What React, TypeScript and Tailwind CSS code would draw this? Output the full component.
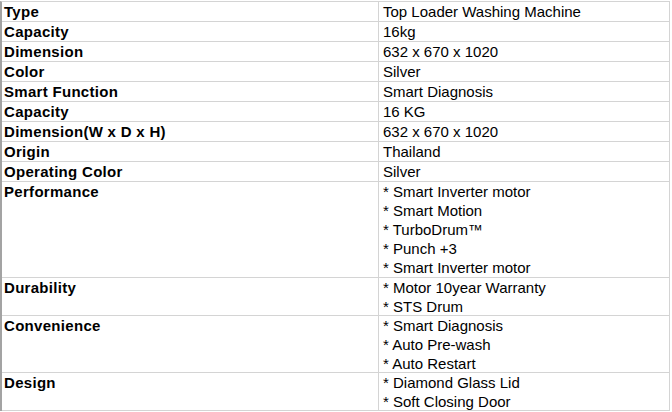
import React from "react";

const rows: [string, string[], string][] = [
  ["Type", ["Top Loader Washing Machine"], "h-[20px]"],
  ["Capacity", ["16kg"], "h-[20px]"],
  ["Dimension", ["632 x 670 x 1020"], "h-[20px]"],
  ["Color", ["Silver"], "h-[20px]"],
  ["Smart Function", ["Smart Diagnosis"], "h-[20px]"],
  ["Capacity", ["16 KG"], "h-[20px]"],
  ["Dimension(W x D x H)", ["632 x 670 x 1020"], "h-[20px]"],
  ["Origin", ["Thailand"], "h-[20px]"],
  ["Operating Color", ["Silver"], "h-[20px]"],
  [
    "Performance",
    [
      "* Smart Inverter motor",
      "* Smart Motion",
      "* TurboDrum™",
      "* Punch +3",
      "* Smart Inverter motor",
    ],
    "h-[96px]",
  ],
  ["Durability", ["* Motor 10year Warranty", "* STS Drum"], "h-[38px]"],
  [
    "Convenience",
    ["* Smart Diagnosis", "* Auto Pre-wash", "* Auto Restart"],
    "h-[57px]",
  ],
  ["Design", ["* Diamond Glass Lid", "* Soft Closing Door"], "h-[38px]"],
];

export default function App() {
  return (
    <div
      className="w-[672px] h-[412px] overflow-hidden bg-white text-black"
      style={{ fontFamily: '"Liberation Sans", Arial, sans-serif' }}
    >
      <div className="mt-px w-[670px] border-t border-l-2 border-r border-t-[#d4d4d4] border-l-[#a3a3a3] border-r-[#d4d4d4]">
        {rows.map(([label, values, h], i) => (
          <div key={i} className={`flex overflow-hidden border-b border-[#d4d4d4] ${h}`}>
            <div className="w-[377px] shrink-0 border-r border-[#d4d4d4] pl-[2px] text-[15px] leading-[19px] font-bold tracking-[0.3px]">
              {label}
            </div>
            <div className="flex-1 pl-[4px] text-[15px] leading-[19px]">
              {values.map((v, j) => (
                <div key={j}>{v}</div>
              ))}
            </div>
          </div>
        ))}
      </div>
    </div>
  );
}
